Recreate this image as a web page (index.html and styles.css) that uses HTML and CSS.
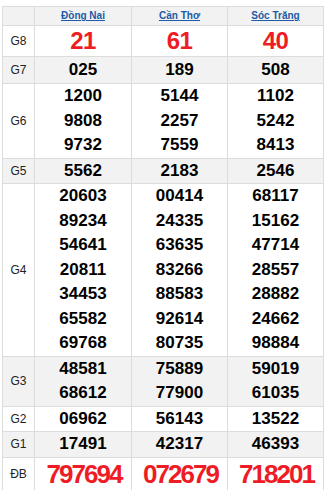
FILE: index.html
```html
<!DOCTYPE html>
<html lang="vi">
<head>
<meta charset="utf-8">
<title>Kết quả xổ số</title>
<link rel="stylesheet" href="styles.css">
</head>
<body>
<div class="kq">
  <div class="row head alt">
    <div class="lbl"></div>
    <div class="prov"><a href="#">Đồng Nai</a></div>
    <div class="prov"><a href="#">Cần Thơ</a></div>
    <div class="prov"><a href="#">Sóc Trăng</a></div>
  </div>
  <div class="row g8">
    <div class="lbl">G8</div>
    <div class="red g8n">21</div>
    <div class="red g8n">61</div>
    <div class="red g8n">40</div>
  </div>
  <div class="row g7 alt">
    <div class="lbl">G7</div>
    <div class="num">025</div>
    <div class="num">189</div>
    <div class="num">508</div>
  </div>
  <div class="row">
    <div class="lbl">G6</div>
    <div class="num"><span>1200</span><span>9808</span><span>9732</span></div>
    <div class="num"><span>5144</span><span>2257</span><span>7559</span></div>
    <div class="num"><span>1102</span><span>5242</span><span>8413</span></div>
  </div>
  <div class="row alt">
    <div class="lbl">G5</div>
    <div class="num"><span>5562</span></div>
    <div class="num"><span>2183</span></div>
    <div class="num"><span>2546</span></div>
  </div>
  <div class="row">
    <div class="lbl">G4</div>
    <div class="num"><span>20603</span><span>89234</span><span>54641</span><span>20811</span><span>34453</span><span>65582</span><span>69768</span></div>
    <div class="num"><span>00414</span><span>24335</span><span>63635</span><span>83266</span><span>88583</span><span>92614</span><span>80735</span></div>
    <div class="num"><span>68117</span><span>15162</span><span>47714</span><span>28557</span><span>28882</span><span>24662</span><span>98884</span></div>
  </div>
  <div class="row alt">
    <div class="lbl">G3</div>
    <div class="num"><span>48581</span><span>68612</span></div>
    <div class="num"><span>75889</span><span>77900</span></div>
    <div class="num"><span>59019</span><span>61035</span></div>
  </div>
  <div class="row">
    <div class="lbl">G2</div>
    <div class="num"><span>06962</span></div>
    <div class="num"><span>56143</span></div>
    <div class="num"><span>13522</span></div>
  </div>
  <div class="row alt">
    <div class="lbl">G1</div>
    <div class="num"><span>17491</span></div>
    <div class="num"><span>42317</span></div>
    <div class="num"><span>46393</span></div>
  </div>
  <div class="row db">
    <div class="lbl">ĐB</div>
    <div class="red dbn">797694</div>
    <div class="red dbn">072679</div>
    <div class="red dbn">718201</div>
  </div>
</div>
</body>
</html>
```
FILE: styles.css
```css
html, body {
  margin: 0;
  padding: 0;
  background: #fff;
}

body {
  font-family: "Liberation Sans", Arial, sans-serif;
  color: #000;
}

.kq {
  margin: 6px 0 0 2px;
  width: 322px;
  box-sizing: border-box;
  border-left: 1px solid #dcdcdc;
  border-top: 1px solid #dcdcdc;
}

.row {
  display: grid;
  grid-template-columns: 32px 97px 96px 96px;
  background: #fff;
}

.row.alt {
  background: #f2f2f2;
}

.row > div {
  box-sizing: border-box;
  border-right: 1px solid #dcdcdc;
  border-bottom: 1px solid #dcdcdc;
  display: flex;
  flex-direction: column;
  justify-content: center;
  align-items: center;
  text-align: center;
}

.lbl {
  font-size: 12px;
  color: #222;
}

.head > div {
  height: 19px;
}

.prov a {
  font-size: 10px;
  font-weight: bold;
  color: #1b5aa6;
  text-decoration: underline;
  line-height: 12px;
}

.g8 > div {
  height: 31px;
}

.g7 > div {
  height: 27px;
}

.num {
  font-size: 17px;
  font-weight: bold;
  line-height: 24.5px;
}

.num span {
  display: block;
}

.red {
  color: #ee1c25;
  font-weight: bold;
}

.g8n {
  font-size: 24px;
  letter-spacing: -0.5px;
}

.db > div {
  height: 34px;
}

.dbn {
  font-size: 26px;
  letter-spacing: -2px;
  padding-left: 2px;
}
```
